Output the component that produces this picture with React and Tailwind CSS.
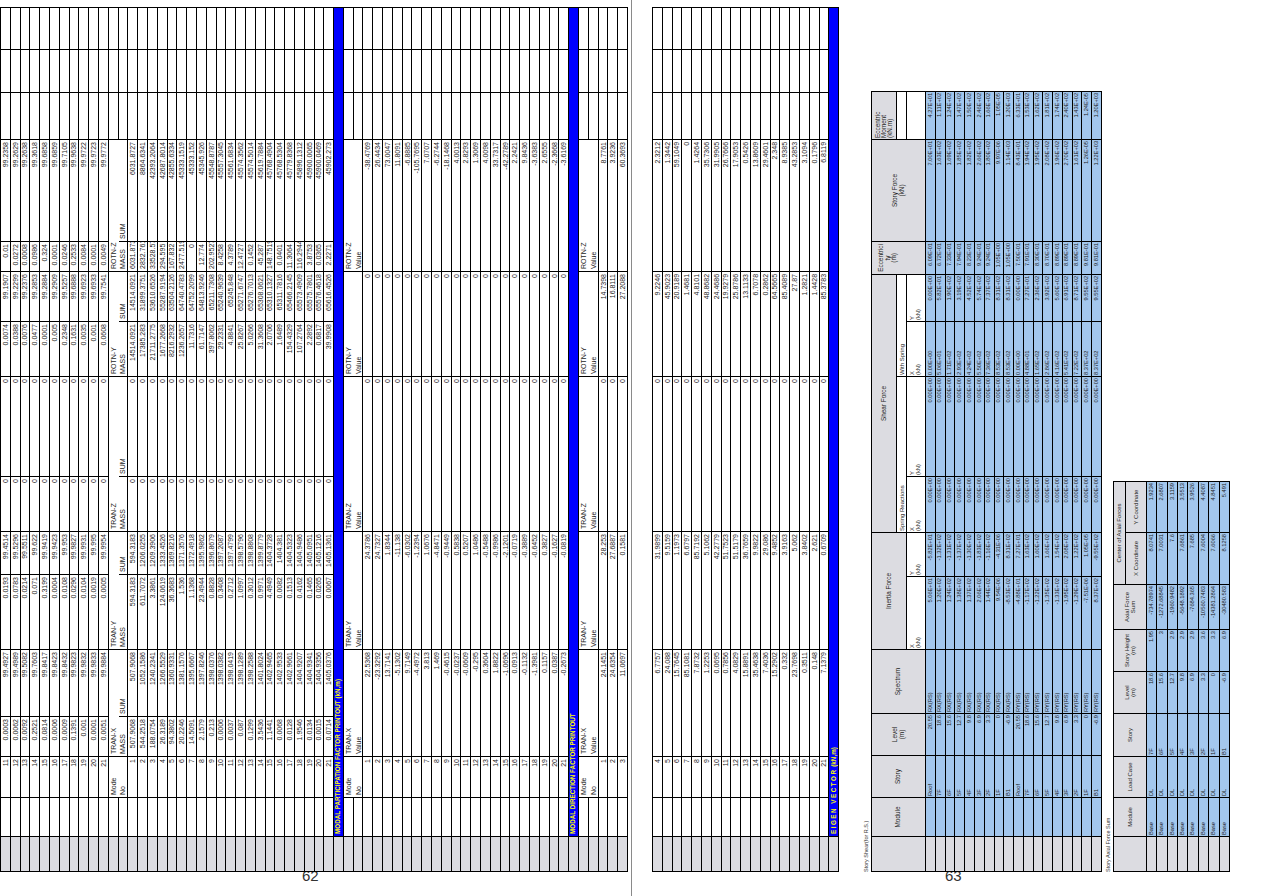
import React from 'react'

// column grid shared by the modal tables (original, unrotated order)
const W = ['w-[35px]', 'w-[39px]', 'w-[41px]', 'w-[40px]', 'w-[67px]', 'w-[75px]', 'w-[43px]', 'w-[55px]', 'w-[100px]', 'w-[55px]', 'w-[50px]', 'w-[30px]', 'w-[102px]', 'w-[47px]', 'w-[43px]', 'w-[42px]']
const groups = ['TRAN-X', 'TRAN-Y', 'TRAN-Z', 'ROTN-Y', 'ROTN-Z']

const cell = 'border-r border-b border-black p-0 px-[2px] leading-none whitespace-nowrap overflow-hidden'
const head1 = 'border-r border-black p-0 px-[2px] leading-none whitespace-nowrap text-left'
const gray = 'bg-[#dcdce1]'
const blue = 'bg-[#a3c7ed]'

const massPct = [
  ['11', '0.0003', '99.4927', '0.0193', '99.4514', '0', '0', '0.0074', '99.1907', '0.01', '99.2358'],
  ['12', '0.0062', '99.4989', '0.0783', '99.5296', '0', '0', '0.0388', '99.2299', '0.0272', '99.2629'],
  ['13', '0.0092', '99.5082', '0.0214', '99.5511', '0', '0', '0.0076', '99.2376', '0.0008', '99.2638'],
  ['14', '0.2521', '99.7603', '0.071', '99.622', '0', '0', '0.0477', '99.2853', '0.0986', '99.3618'],
  ['15', '0.0814', '99.8417', '0.3199', '99.9419', '0', '0', '0.0001', '99.2884', '0.324', '99.6858'],
  ['16', '0.0006', '99.8423', '0.0004', '99.9423', '0', '0', '0.005', '99.2909', '0.0001', '99.6859'],
  ['17', '0.0009', '99.8432', '0.0108', '99.953', '0', '0', '0.2348', '99.5257', '0.0246', '99.7105'],
  ['18', '0.1391', '99.9823', '0.0296', '99.9827', '0', '0', '0.1631', '99.6888', '0.2533', '99.9638'],
  ['19', '0.001', '99.9832', '0.0104', '99.9931', '0', '0', '0.0035', '99.6923', '0.0084', '99.9722'],
  ['20', '0.0001', '99.9833', '0.0019', '99.995', '0', '0', '0.001', '99.6933', '0.0001', '99.9723'],
  ['21', '0.0051', '99.9884', '0.0005', '99.9954', '0', '0', '0.0608', '99.7541', '0.0049', '99.9772'],
]

const massAbs = [
  ['1', '507.9068', '507.9068', '594.3183', '594.3183', '0', '0', '14514.0921', '14514.0921', '6031.873', '6031.8727'],
  ['2', '544.2518', '1052.1586', '611.7072', '1206.0255', '0', '0', '17385.283', '31899.3751', '2832.761', '8864.6341'],
  ['3', '188.0754', '1240.2341', '3.3861', '1209.3906', '0', '0', '21711.2775', '53610.6526', '33528.57', '42393.2064'],
  ['4', '26.3189', '1266.5529', '124.0619', '1333.4526', '0', '0', '1677.2668', '55287.9194', '294.595', '42687.8014'],
  ['5', '94.3802', '1360.9331', '36.3683', '1369.8216', '0', '0', '8216.2932', '63504.2126', '167.832', '42855.6334'],
  ['6', '20.2246', '1381.1576', '1.536', '1371.3576', '0', '0', '1236.2657', '64740.4783', '2477.519', '45333.1519'],
  ['7', '14.5091', '1395.6667', '1.1368', '1372.4918', '0', '0', '11.7316', '64752.2099', '0', '45333.152'],
  ['8', '2.1579', '1397.8246', '23.4944', '1395.9862', '0', '0', '61.7147', '64813.9246', '12.774', '45345.926'],
  ['9', '0.213', '1398.0376', '0.8828', '1396.8679', '0', '0', '397.8062', '65211.7308', '202.9527', '45548.8787'],
  ['10', '0.0006', '1398.0382', '0.3408', '1397.2087', '0', '0', '29.2331', '65240.9639', '8.4258', '45557.3045'],
  ['11', '0.0037', '1398.0419', '0.2712', '1397.4799', '0', '0', '4.8841', '65245.848', '4.3789', '45561.6834'],
  ['12', '0.087', '1398.1289', '1.0997', '1398.5796', '0', '0', '25.8267', '65271.6747', '12.4727', '45574.3562'],
  ['13', '0.1299', '1398.2588', '0.3012', '1398.8808', '0', '0', '5.0266', '65276.7013', '0.1452', '45574.5014'],
  ['14', '3.5436', '1401.8024', '0.9971', '1399.8779', '0', '0', '31.3608', '65308.0621', '45.287', '45619.7884'],
  ['15', '1.1441', '1402.9465', '4.4949', '1404.3728', '0', '0', '2.0706', '65310.1327', '148.7519', '45768.4904'],
  ['16', '0.0068', '1402.9533', '0.0082', '1404.381', '0', '0', '1.6489', '65311.7816', '0.0401', '45768.5304'],
  ['17', '0.0128', '1402.9661', '0.1513', '1404.5323', '0', '0', '154.4329', '65466.2145', '11.3064', '45779.8368'],
  ['18', '1.9546', '1404.9207', '0.4162', '1404.9486', '0', '0', '107.2764', '65573.4909', '116.2944', '45896.1312'],
  ['19', '0.0134', '1404.9341', '0.1465', '1405.0951', '0', '0', '2.2892', '65575.7801', '3.8753', '45900.0065'],
  ['20', '0.0015', '1404.9356', '0.0265', '1405.1216', '0', '0', '0.6817', '65576.4618', '0.0365', '45900.0469'],
  ['21', '0.0714', '1405.0376', '0.0067', '1405.1361', '0', '0', '39.9908', '65616.4526', '2.2271', '45902.273'],
]

const partTx = ['22.5368', '-23.3292', '13.7141', '-5.1302', '9.7149', '-4.4972', '3.813', '1.469', '-0.4615', '-0.0237', '-0.0609', '-0.295', '0.3604', '1.8822', '-1.0696', '0.0913', '-0.1132', '-1.3981', '0.1157', '0.0387', '-0.2673']
const partTy = ['24.3786', '24.7327', '1.8344', '-11.138', '-6.0302', '-1.2394', '1.0676', '-4.8471', '-0.9449', '0.5838', '0.5207', '1.0486', '-0.5488', '-0.9986', '-2.1201', '-0.0719', '-0.3889', '-0.6452', '0.3827', '-0.1627', '-0.0819']
const partRz = ['-38.4769', '26.4434', '73.0047', '11.8091', '-6.8885', '-105.7695', '7.0707', '-6.2744', '-18.1468', '4.0013', '2.8293', '1.3069', '4.0098', '33.7317', '-42.2789', '2.2421', '9.8436', '-3.6383', '2.6555', '-2.3668', '-3.6169']
const participation = partTx.map((tx, i) => [String(i + 1), tx, partTy[i], '0', '0', partRz[i]])

const dirTx = ['24.1451', '24.6354', '11.0697', '6.7757', '24.088', '15.7645', '85.1081', '7.8732', '1.2253', '0.0695', '0.7856', '4.0829', '15.8891', '35.4638', '7.4036', '15.2902', '0.332', '23.7698', '0.3511', '0.148', '7.1379']
const dirTy = ['28.253', '27.6887', '0.1581', '31.9899', '9.5159', '1.1973', '6.6797', '85.7192', '5.1062', '42.2779', '51.7523', '51.5179', '36.7659', '9.9822', '29.086', '9.4852', '3.9163', '5.062', '3.8402', '2.621', '0.6709']
const dirRy = ['14.7398', '16.8111', '27.2088', '9.2246', '45.9023', '20.9189', '1.4681', '4.8101', '48.8682', '24.4686', '19.9279', '25.8786', '13.1133', '6.7078', '0.2862', '64.5665', '85.4089', '27.87', '1.2821', '1.4428', '85.3783']
const dirRz = ['8.7761', '3.9236', '60.3693', '2.3212', '1.3442', '59.1049', '0', '1.4264', '35.7306', '31.9905', '26.7666', '17.9053', '0.5426', '13.8609', '29.4601', '2.348', '8.9385', '43.2853', '3.1094', '0.1796', '6.8119']
const direction = dirTx.map((tx, i) => [String(i + 1), tx, dirTy[i], '0', dirRy[i], dirRz[i]])

function GrayTd() {
  return <td className={`${cell} ${gray}`} />
}

function BlankTd() {
  return <td className={cell} />
}

function Tail() {
  return (
    <>
      <BlankTd />
      <BlankTd />
      <BlankTd />
    </>
  )
}

function HeadRows({ mass }) {
  return (
    <>
      <tr className="h-[9.8px]">
        <GrayTd />
        <BlankTd />
        <td className={head1}>Mode</td>
        {groups.map(g => (
          <td key={g} colSpan={2} className={head1}>{g}</td>
        ))}
        <Tail />
      </tr>
      <tr className="h-[9.8px]">
        <GrayTd />
        <BlankTd />
        <td className={`${cell} text-left`}>No</td>
        {mass
          ? groups.map(g => (
              <React.Fragment key={g}>
                <td className={`${cell} text-left`}>MASS</td>
                <td className={`${cell} text-left`}>SUM</td>
              </React.Fragment>
            ))
          : groups.map(g => (
              <td key={g} colSpan={2} className={`${cell} text-left`}>Value</td>
            ))}
        <Tail />
      </tr>
    </>
  )
}

function MassRow({ r }) {
  return (
    <tr className="h-[9.8px]">
      <GrayTd />
      <BlankTd />
      {r.map((v, i) => (
        <td key={i} className={`${cell} text-right`}>{v}</td>
      ))}
      <Tail />
    </tr>
  )
}

function FactorRow({ r }) {
  const [mode, ...vals] = r
  return (
    <tr className="h-[9.8px]">
      <GrayTd />
      <BlankTd />
      <td className={`${cell} text-right`}>{mode}</td>
      {vals.map((v, i) => (
        <td key={i} colSpan={2} className={`${cell} text-right`}>{v}</td>
      ))}
      <Tail />
    </tr>
  )
}

function BlueRow({ children }) {
  return (
    <tr className="h-[9.8px]">
      <GrayTd />
      <td colSpan={15} className={`${cell} bg-[#0000ff] text-[#ffff00] font-bold text-[6.3px] text-left`}>
        {children}
      </td>
    </tr>
  )
}

function ModalTable({ children }) {
  return (
    <table className="table-fixed border-separate border-spacing-0 border-t border-l border-black w-[865px] text-[7px] text-[#1c1c1c]">
      <colgroup>
        {W.map((w, i) => (
          <col key={i} className={w} />
        ))}
      </colgroup>
      <tbody>{children}</tbody>
    </table>
  )
}

// ---- Story shear table ----
const stories = ['Roof', '7F', '6F', '5F', '4F', '3F', '2F', '1F', 'B1']
const levels = ['20.55', '18.6', '15.6', '12.7', '9.8', '6.9', '3.3', '0', '-6.9']
const ifx = ['5.06E+01', '1.20E+02', '1.24E+02', '1.38E+02', '1.37E+02', '2.06E+02', '1.44E+02', '9.54E-06', '-8.53E+02', '-4.88E+01', '-1.17E+02', '-1.22E+02', '-1.35E+02', '-1.33E+02', '-1.95E+02', '-1.29E+02', '-7.51E-06', '8.37E+02']
const ify = ['-5.82E+01', '-1.32E+02', '-1.31E+02', '-1.37E+02', '-1.30E+02', '-1.83E+02', '-1.16E+02', '-4.31E-06', '8.31E+02', '7.27E+01', '1.63E+02', '1.60E+02', '1.66E+02', '1.54E+02', '2.08E+02', '1.22E+02', '1.05E-05', '-9.55E+02']
const wsx = ['0.00E+00', '5.06E+01', '1.71E+02', '2.93E+02', '4.24E+02', '5.50E+02', '7.36E+02', '8.53E+02', '8.53E+02', '0.00E+00', '4.88E+01', '1.65E+02', '2.86E+02', '4.16E+02', '5.41E+02', '7.22E+02', '8.37E+02', '8.37E+02']
const wsy = ['0.00E+00', '5.82E+01', '1.90E+02', '3.19E+02', '4.52E+02', '5.74E+02', '7.37E+02', '8.31E+02', '8.31E+02', '0.00E+00', '7.27E+01', '2.36E+02', '3.92E+02', '5.60E+02', '6.91E+02', '8.71E+02', '9.55E+02', '9.55E+02']
const ecc = ['6.09E-01', '6.72E-01', '7.33E-01', '7.94E-01', '8.23E-01', '9.24E-01', '9.24E-01', '1.05E+00', '1.05E+00', '7.50E-01', '7.91E-01', '8.30E-01', '8.70E-01', '8.89E-01', '8.89E-01', '8.89E-01', '9.81E-01', '9.81E-01']
const sforce = ['7.00E+01', '1.63E+02', '1.69E+02', '1.85E+02', '1.82E+02', '2.66E+02', '1.80E+02', '9.97E-06', '1.14E+03', '8.43E+01', '1.94E+02', '1.95E+02', '2.08E+02', '1.96E+02', '2.70E+02', '1.61E+02', '1.26E-05', '1.22E+03']
const emom = ['4.27E+01', '1.11E+02', '1.24E+02', '1.47E+02', '1.50E+02', '2.46E+02', '1.66E+02', '1.05E-05', '1.20E+03', '6.33E+01', '1.53E+02', '1.62E+02', '1.81E+02', '1.74E+02', '2.40E+02', '1.43E+02', '1.24E-05', '1.20E+03']

const sc = 'border-r border-b border-black p-0 px-[1px] leading-none whitespace-nowrap overflow-hidden'
const sh = `${sc} ${gray} text-center align-middle leading-[1.15]`

function ShearTable() {
  return (
    <table className="table-fixed border-separate border-spacing-0 border-t border-l border-black w-[781px] text-[5.7px] text-[#1c1c1c]">
      <colgroup>
        <col className="w-[35px]" />
        <col className="w-[39px]" />
        <col className="w-[42px]" />
        <col className="w-[42px]" />
        <col className="w-[64px]" />
        <col className="w-[73px]" />
        <col className="w-[44px]" />
        <col className="w-[56px]" />
        <col className="w-[100px]" />
        <col className="w-[55px]" />
        <col className="w-[47px]" />
        <col className="w-[33px]" />
        <col className="w-[102px]" />
        <col className="w-[48px]" />
      </colgroup>
      <tbody>
        <tr className="h-[25px] text-[6.4px]">
          <td rowSpan={3} className={sh} />
          <td rowSpan={3} className={sh}>Module</td>
          <td rowSpan={3} className={sh}>Story</td>
          <td rowSpan={3} className={sh}>Level<br />(m)</td>
          <td rowSpan={3} className={sh}>Spectrum</td>
          <td rowSpan={2} colSpan={2} className={sh}>Inertia Force</td>
          <td colSpan={4} className={sh}>Shear Force</td>
          <td rowSpan={3} className={`${sh} !align-top pt-[6px]`}>Eccentrici<br />ty<br />(m)</td>
          <td rowSpan={3} className={sh}>Story Force<br />(kN)</td>
          <td className={`${sh} !text-left`}>Eccentric<br />Moment<br />(kN.m)</td>
        </tr>
        <tr className="h-[10px] text-[6px]">
          <td colSpan={2} className={`${sc} text-left`}>Spring Reactions</td>
          <td colSpan={2} className={`${sc} text-left`}>With Spring</td>
          <td className={sc} />
        </tr>
        <tr className="h-[19px] text-[5.8px]">
          {[0, 1, 2, 3, 4, 5].map(i => (
            <td key={i} className={`${sc} text-left leading-[1.15]`}>{i % 2 ? 'Y' : 'X'}<br />(kN)</td>
          ))}
          <td className={sc} />
        </tr>
        {ifx.map((_, i) => (
          <tr key={i} className="h-[9.78px]">
            <td className={`${sc} ${gray}`} />
            <td className={`${sc} ${blue}`} />
            <td className={`${sc} ${blue} text-left`}>{stories[i % 9]}</td>
            <td className={`${sc} ${blue} text-right`}>{levels[i % 9]}</td>
            <td className={`${sc} ${blue} text-left`}>{i < 9 ? 'RX(RS)' : 'RY(RS)'}</td>
            <td className={`${sc} ${blue} text-right`}>{ifx[i]}</td>
            <td className={`${sc} ${blue} text-right`}>{ify[i]}</td>
            <td className={`${sc} ${blue} text-right`}>0.00E+00</td>
            <td className={`${sc} ${blue} text-right`}>0.00E+00</td>
            <td className={`${sc} ${blue} text-left`}>{wsx[i]}</td>
            <td className={`${sc} ${blue} text-right`}>{wsy[i]}</td>
            <td className={`${sc} ${blue} text-right`}>{ecc[i]}</td>
            <td className={`${sc} ${blue} text-right`}>{sforce[i]}</td>
            <td className={`${sc} ${blue} text-right`}>{emom[i]}</td>
          </tr>
        ))}
      </tbody>
    </table>
  )
}

// ---- Story axial force table ----
const axial = [
  ['7F', '18.6', '1.95', '-734.78974', '8.0741', '1.9234'],
  ['6F', '15.6', '3', '-1272.68845', '7.0031', '2.6807'],
  ['5F', '12.7', '2.9', '-1960.9482', '7.6', '3.1159'],
  ['4F', '9.8', '2.9', '-5648.1892', '7.6861', '3.5513'],
  ['3F', '6.9', '2.9', '-7684.365', '7.685', '3.9526'],
  ['2F', '3.3', '3.6', '-10560.7483', '7.6004', '4.4087'],
  ['1F', '0', '3.3', '-14381.2864', '7.6066', '4.8451'],
  ['B1', '-6.9', '6.9', '-30480.583', '8.1258', '5.491'],
]

function AxialTable() {
  return (
    <table className="table-fixed border-separate border-spacing-0 border-t border-l border-black w-[391px] text-[5.7px] text-[#1c1c1c]">
      <colgroup>
        <col className="w-[35px]" />
        <col className="w-[39px]" />
        <col className="w-[41px]" />
        <col className="w-[43px]" />
        <col className="w-[42px]" />
        <col className="w-[42px]" />
        <col className="w-[45px]" />
        <col className="w-[52px]" />
        <col className="w-[51px]" />
      </colgroup>
      <tbody>
        <tr className="h-[12px] text-[6px]">
          <td rowSpan={2} className={sh} />
          <td rowSpan={2} className={sh}>Module</td>
          <td rowSpan={2} className={sh}>Load Case</td>
          <td rowSpan={2} className={sh}>Story</td>
          <td rowSpan={2} className={sh}>Level<br />(m)</td>
          <td rowSpan={2} className={sh}>Story Height<br />(m)</td>
          <td rowSpan={2} className={sh}>Axial Force<br />Sum</td>
          <td colSpan={2} className={sh}>Center of Axial Forces</td>
        </tr>
        <tr className="h-[21px] text-[6px]">
          <td className={sh}>X Coordinate</td>
          <td className={sh}>Y Coordinate</td>
        </tr>
        {axial.map(r => (
          <tr key={r[0]} className="h-[10.4px]">
            <td className={`${sc} ${gray}`} />
            <td className={`${sc} ${blue} text-left`}>Base</td>
            <td className={`${sc} ${blue} text-left`}>DL</td>
            <td className={`${sc} ${blue} text-left`}>{r[0]}</td>
            {r.slice(1).map((v, i) => (
              <td key={i} className={`${sc} ${blue} text-right`}>{v}</td>
            ))}
          </tr>
        ))}
      </tbody>
    </table>
  )
}

export default function App() {
  return (
    <div className="flex w-[1272px] h-[896px] overflow-hidden bg-white font-['Liberation_Sans',Arial,sans-serif]">
      {/* page 62 */}
      <div className="w-[631px] shrink-0 flex flex-col">
        <div className="h-[873px] overflow-hidden">
          <div className="w-[865px] origin-top-left -rotate-90 translate-y-[872px]">
            <ModalTable>
              {massPct.map(r => <MassRow key={'p' + r[0]} r={r} />)}
              <HeadRows mass />
              {massAbs.map(r => <MassRow key={'a' + r[0]} r={r} />)}
              <BlueRow>MODAL PARTICIPATION FACTOR PRINTOUT (kN,m)</BlueRow>
              <HeadRows />
              {participation.map(r => <FactorRow key={'f' + r[0]} r={r} />)}
              <BlueRow>MODAL DIRECTION FACTOR PRINTOUT</BlueRow>
              <HeadRows />
              {direction.slice(0, 3).map(r => <FactorRow key={'d' + r[0]} r={r} />)}
            </ModalTable>
          </div>
        </div>
        <div className="-mt-[5px] pl-[302px] text-[15px] leading-none text-[#333]">62</div>
      </div>

      <div className="w-px shrink-0 bg-[#8a8a8a]" />

      {/* page 63 */}
      <div className="flex-1 flex flex-col">
        <div className="h-[873px] overflow-hidden">
          <div className="w-[865px] origin-top-left -rotate-90 translate-y-[872px] pt-[20px] flex flex-col items-start">
            <ModalTable>
              {direction.slice(3).map(r => <FactorRow key={'d' + r[0]} r={r} />)}
              <BlueRow>
                <span className="tracking-[1.5px]">EIGEN VECTOR</span> (kN,m)
              </BlueRow>
            </ModalTable>
            <p className="mt-[22px] text-[5.5px] leading-[10px] text-[#333]">Story Shear(for R.S.)</p>
            <ShearTable />
            <p className="mt-[1px] text-[5.5px] leading-[10px] text-[#333]">Story Axial Force Sum</p>
            <AxialTable />
          </div>
        </div>
        <div className="-mt-[5px] pl-[313px] text-[15px] leading-none text-[#333]">63</div>
      </div>
    </div>
  )
}
